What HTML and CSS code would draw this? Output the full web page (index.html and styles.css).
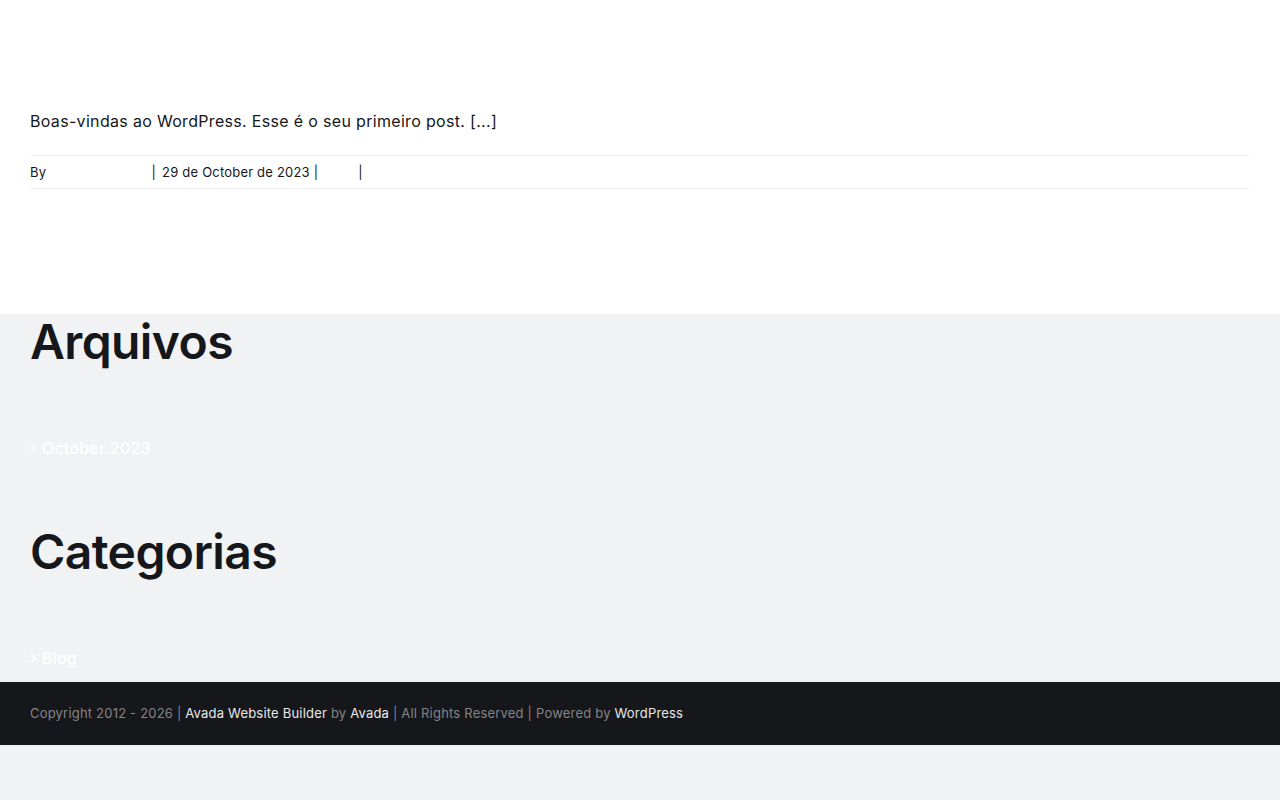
FILE: index.html
```html
<!DOCTYPE html>
<html lang="pt-BR">
<head>
  <meta charset="UTF-8">
  <title>Arquivos</title>
  <link rel="stylesheet" href="styles.css">
</head>
<body>
  <div class="main">
    <div class="post">
      <p class="excerpt">Boas-vindas ao WordPress. Esse é o seu primeiro post. [...]</p>
      <div class="meta">
        <span>By <a class="author" href="#">admin</a></span>
        <span class="sep">|</span>
        <span>29 de October de 2023</span>
        <span class="sep">|</span>
        <a class="cat" href="#">Blog</a>
        <span class="sep">|</span>
      </div>
    </div>
  </div>

  <div class="sidebar">
    <div class="widget">
      <h2>Arquivos</h2>
      <ul>
        <li>
          <svg class="chev" viewBox="0 0 6 10" width="6" height="10"><path d="M1 1l4 4-4 4" fill="none" stroke="currentColor" stroke-width="1.3"/></svg>
          <a href="#">October 2023</a>
        </li>
      </ul>
    </div>
    <div class="widget">
      <h2>Categorias</h2>
      <ul>
        <li>
          <svg class="chev" viewBox="0 0 6 10" width="6" height="10"><path d="M1 1l4 4-4 4" fill="none" stroke="currentColor" stroke-width="1.3"/></svg>
          <a href="#">Blog</a>
        </li>
      </ul>
    </div>
  </div>

  <div class="footer">
    Copyright 2012 - 2026 <span class="bar">|</span> <a href="#">Avada Website Builder</a> by <a href="#">Avada</a> <span class="bar">|</span> All Rights Reserved <span class="bar">|</span> Powered by <a href="#">WordPress</a>
  </div>
</body>
</html>
```

FILE: styles.css
```css
:root {
  --text_color: #16171a;
  --grey_bg: #f1f2f4;
}

body {
  margin: 0;
  background-color: var(--grey_bg);
  font-family: Inter, "Noto Sans", sans-serif;
  color: var(--text_color);
}

a {
  text-decoration: none;
}

.main {
  background-color: #ffffff;
  padding: 107px 30px 0;
  height: 207px;
}

.excerpt {
  margin: 0;
  font-size: 16px;
  line-height: 28px;
  letter-spacing: 0.32px;
}

.meta {
  margin-top: 20px;
  border-top: 1px solid #f2f2f3;
  border-bottom: 1px solid #f2f2f3;
  font-size: 13px;
  line-height: 32px;
  letter-spacing: 0.2px;
  display: flex;
}

.meta .author,
.meta .cat {
  color: #ffffff;
}

.meta .author {
  margin-right: 59px;
}

.meta .sep {
  color: var(--text_color);
  margin: 0 6px 0 4px;
}

.meta .cat {
  width: 30px;
}

.sidebar {
  padding: 0 30px 12px;
}

.widget {
  margin-bottom: 64px;
}

.widget:last-child {
  margin-bottom: 0;
}

.widget h2 {
  margin: 0 0 67px;
  font-size: 48px;
  line-height: 55px;
  font-weight: 600;
  letter-spacing: -0.6px;
}

.widget ul {
  list-style: none;
  margin: 0;
  padding: 0;
}

.widget li {
  display: flex;
  align-items: center;
  gap: 6px;
  font-size: 16px;
  line-height: 24px;
  font-weight: 500;
  color: #ffffff;
}

.widget li a {
  color: #ffffff;
  letter-spacing: 0.2px;
}

.chev {
  width: 6px;
  height: 10px;
}

.footer {
  background-color: #16171a;
  color: #838488;
  font-size: 13px;
  line-height: 63px;
  padding: 0 30px;
  letter-spacing: 0.2px;
}

.footer a {
  color: #e8e9eb;
}

.footer .bar {
  color: #838488;
}
```
